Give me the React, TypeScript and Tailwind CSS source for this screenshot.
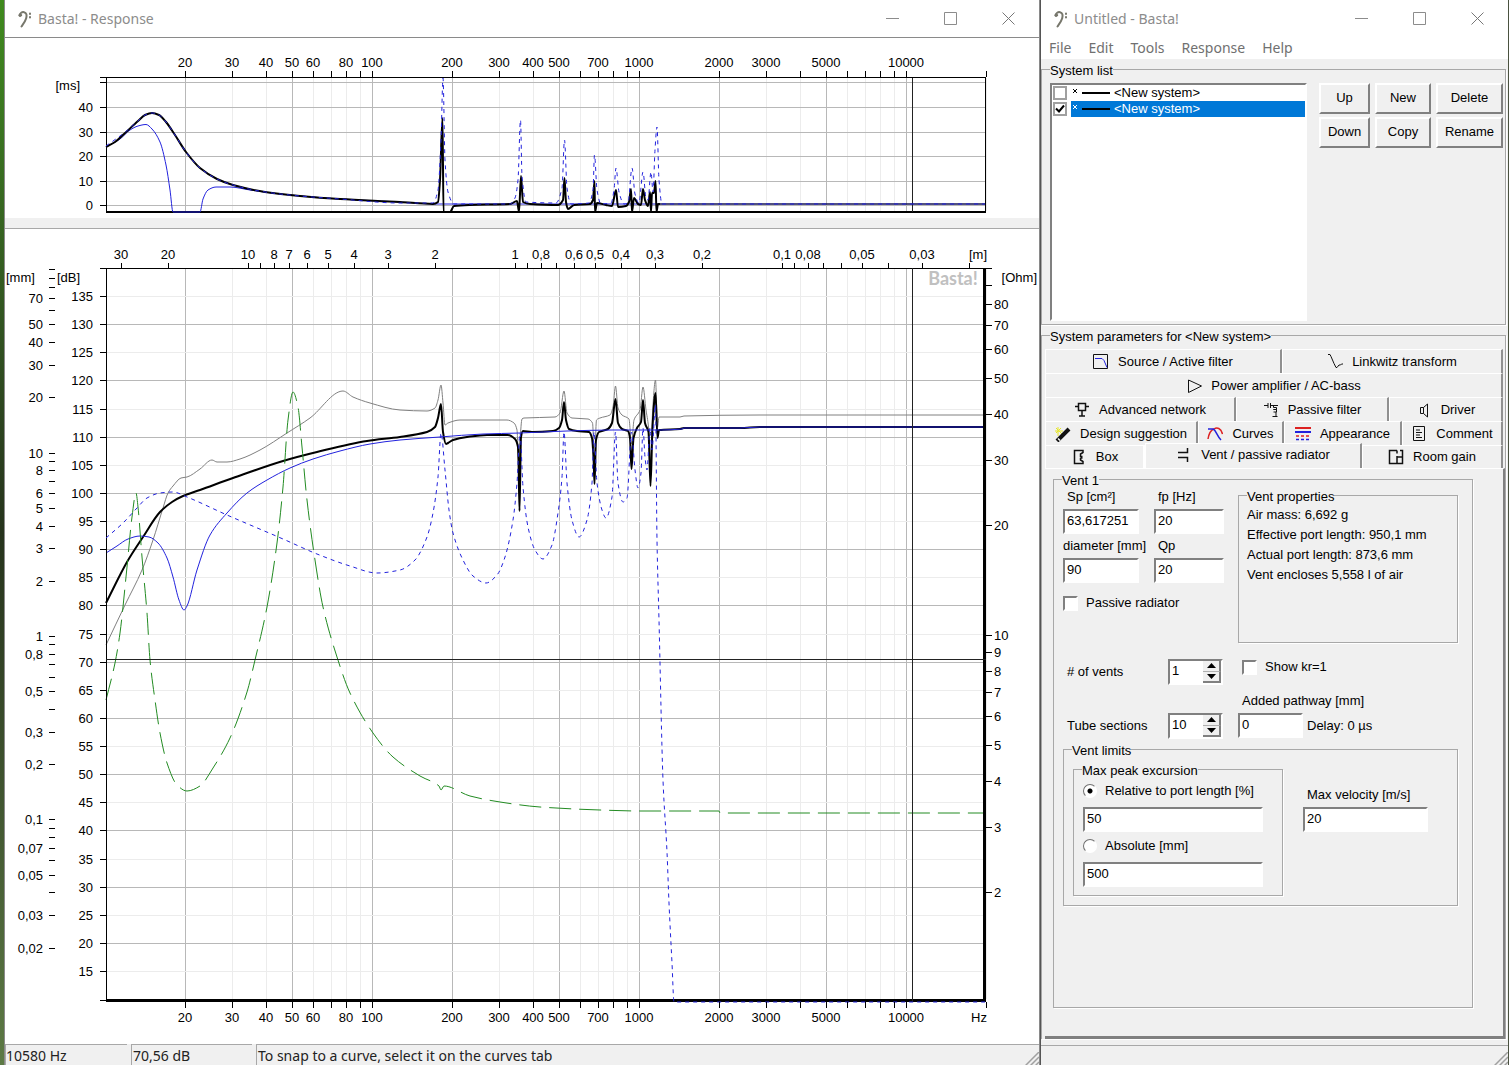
import { useState } from 'react';
import type { ReactNode } from 'react';
import clsx from 'clsx';

type Point = [number, number];

const LEFT = 106;
const RIGHT = 985;
const CURSOR_X = 912;

const freqX = (f: number) => Math.round(372 + 267 * (Math.log10(f) - 2));
const waveX = (m: number) => Math.round(515 - 267 * Math.log10(m));
const dbY = (db: number) => Math.round(296 + (135 - db) * 5.625);
const ohmY = (r: number) => Math.round(635 - 367 * (Math.log10(r) - 1));
const mmY = (mm: number) => Math.round(636 - 183.4 * Math.log10(mm));
const msY = (ms: number) => Math.round(205 - ms * 2.45);

const label = (n: number) => String(n).replace('.', ',');

// 1..9 steps of each decade, limited to a range
function decades(from: number, to: number): number[] {
  const out: number[] = [];
  for (let e = -2; e <= 4; e++) {
    for (let i = 1; i <= 9; i++) {
      const v = Number((i * 10 ** e).toPrecision(1));
      if (v >= from && v <= to) out.push(v);
    }
  }
  return out;
}

const FREQS = decades(20, 20000);
const FREQ_LABELS = [20, 30, 40, 50, 60, 80, 100, 200, 300, 400, 500, 700, 1000, 2000, 3000, 5000, 10000];
const FREQ_MAJOR = [20, 50, 100, 200, 500, 1000, 2000, 5000, 10000];
const WAVE_LABELS = [30, 20, 10, 8, 7, 6, 5, 4, 3, 2, 1, 0.8, 0.6, 0.5, 0.4, 0.3, 0.2, 0.1, 0.08, 0.05, 0.03];
const MM_LABELS = [70, 50, 40, 30, 20, 10, 8, 6, 5, 4, 3, 2, 1, 0.8, 0.5, 0.3, 0.2, 0.1, 0.07, 0.05, 0.03, 0.02];
const OHM_LABELS = [80, 70, 60, 50, 40, 30, 20, 10, 9, 8, 7, 6, 5, 4, 3, 2];
const DB_STEPS = Array.from({ length: 25 }, (_, i) => 135 - i * 5);

const SPL: Point[] = [
  [106, 603], [127, 562], [143, 537], [160, 512], [172, 502], [183, 496], [200, 490], [233, 478],
  [283, 461], [317, 452], [367, 441], [400, 437], [427, 432], [435, 427], [438, 418], [441, 404],
  [443, 432], [446, 444], [448, 443], [453, 440], [467, 437], [487, 435], [508, 435], [515, 439],
  [518, 447], [518.5, 460], [519.5, 511], [521, 437], [523, 431], [532, 432], [553, 431], [559, 428],
  [562, 420], [564, 402], [566, 420], [569, 429], [577, 431], [589, 432], [592, 438], [593.5, 457],
  [594.5, 484], [596, 440], [599, 432], [608, 429], [612, 423], [615.5, 399], [618, 423], [622, 429],
  [628, 431], [630, 438], [631.5, 469], [633.5, 438], [637, 428], [641, 422], [643, 400], [645, 423],
  [648.5, 432], [650.5, 486], [652.5, 427], [655.5, 393], [657.5, 438], [659, 430], [680, 429], [684, 428],
  [740, 428], [760, 427], [985, 427],
];

const MAX_SPL: Point[] = [
  [106, 645], [125, 605], [142, 570], [153, 540], [163, 508], [168, 493], [173, 486], [181, 478],
  [187, 477], [200, 469], [212, 460], [217, 462], [227, 462], [240, 459], [260, 450], [287, 433],
  [310, 418], [343, 391], [353, 397], [370, 403], [400, 410], [427, 411], [435, 408], [438, 400],
  [441, 385], [443, 403], [445, 425], [448, 423], [460, 420], [507, 420], [514, 423], [517, 430],
  [518.5, 460], [520, 440], [522, 419], [524, 418], [555, 417], [560, 413], [564, 391], [567, 413],
  [572, 418], [588, 419], [592.5, 423], [594.5, 460], [596.5, 420], [600, 418], [610, 415], [613, 407],
  [615.5, 386], [618, 408], [622, 415], [629, 419], [631.5, 444], [634, 420], [640, 410], [643, 387],
  [646, 410], [648.5, 427], [650.5, 470], [652.5, 413], [655.5, 380], [657.5, 427], [659, 417], [680, 417],
  [684, 416], [760, 415], [985, 415],
];

const DRIVER_SPL: Point[] = [
  [106, 553], [117, 546], [128, 539], [140, 536], [149, 537], [158, 543], [167, 558], [173, 577],
  [179, 600], [184, 610], [187, 606], [197, 570], [210, 535], [227, 513], [247, 493], [267, 480],
  [290, 468], [313, 459], [340, 451], [370, 444], [400, 440], [440, 437], [483, 434], [520, 433],
  [567, 431], [613, 430], [660, 430], [682, 429], [684, 428], [740, 428], [760, 427], [985, 427],
];

const VENT_SPL: Point[] = [
  [106, 538], [123, 523], [137, 508], [147, 498], [160, 493], [173, 492], [187, 497], [227, 515],
  [283, 539], [317, 554], [350, 566], [377, 573], [400, 570], [415, 560], [427, 537], [433, 513],
  [438, 477], [441, 433], [445, 470], [449, 510], [453, 533], [463, 560], [473, 576], [486, 583],
  [497, 575], [505, 557], [513, 520], [517, 483], [520, 433], [523, 487], [528, 527], [535, 550],
  [543, 559], [552, 545], [558, 513], [562, 477], [564, 432], [567, 483], [572, 520], [579, 537],
  [587, 520], [592, 483], [594, 432], [597, 483], [602, 510], [606, 518], [612, 497], [615.5, 432],
  [618, 483], [623, 502], [627, 498], [631.5, 432], [635, 470], [638, 488], [641, 473], [643, 428],
  [645, 457], [647, 470], [650, 428], [652, 450], [655.5, 405], [657, 540], [659, 620], [663, 780],
  [667, 852], [669, 903], [672, 963], [674, 1002], [985, 1002],
];

const IMPEDANCE: Point[] = [
  [106, 700], [115, 663], [120, 633], [127, 567], [132, 517], [136, 493], [138, 507], [142, 557],
  [147, 613], [150, 660], [155, 700], [160, 733], [167, 763], [177, 785], [187, 791], [200, 786],
  [213, 768], [230, 738], [247, 692], [255, 660], [267, 607], [277, 543], [283, 487], [288, 420],
  [293, 392], [298, 407], [302, 447], [307, 500], [315, 560], [323, 607], [337, 657], [350, 693],
  [373, 733], [393, 757], [420, 776], [439, 786], [441, 790], [444, 786], [470, 796], [500, 802],
  [540, 807], [600, 810], [640, 811], [719, 811], [720, 813], [985, 813],
];

const DELAY: Point[] = [
  [106, 147], [115, 142], [124, 134], [138, 121], [145, 115], [152, 113], [159, 115], [166, 122],
  [175, 135], [186, 152], [200, 168], [217, 179], [233, 185], [265, 192], [300, 196], [340, 199],
  [400, 202], [433, 204], [438, 202], [440, 180], [442.5, 118], [443.5, 212], [450, 212], [454, 206],
  [470, 205], [510, 204], [517, 201], [519, 212], [521, 176], [523, 202], [530, 204], [558, 205],
  [563, 200], [564.5, 178], [566, 202], [568, 209], [574, 205], [590, 204], [593, 200], [594.5, 181],
  [595, 212], [597, 203], [606, 205], [612, 206], [616, 190], [618, 207], [626, 206], [629, 202],
  [631, 189], [632, 212], [634, 198], [638, 204], [641, 205], [643, 189], [645, 200], [648, 206],
  [650, 192], [651, 212], [652, 193], [654, 193], [655.5, 181], [656.5, 212], [658, 204], [660, 204],
];

const VENT_DELAY: Point[] = [
  [106, 146], [124, 133], [138, 121], [145, 115], [152, 113], [159, 115], [166, 122], [175, 135],
  [186, 152], [200, 168], [217, 179], [233, 185], [265, 192], [300, 196], [340, 199], [400, 203],
  [433, 203], [438, 190], [441, 140], [443, 78], [445, 160], [448, 192], [454, 204], [510, 204],
  [515, 198], [518, 180], [520.5, 120], [522, 176], [526, 202], [556, 203], [562, 188], [564.5, 140],
  [567, 188], [571, 204], [589, 203], [593, 190], [594.5, 155], [597, 190], [601, 204], [611, 203],
  [614, 190], [616, 168], [619, 192], [624, 204], [628, 203], [632, 168], [635, 194], [639, 203],
  [643, 172], [646, 198], [648, 200], [651, 172], [653, 192], [655, 150], [657, 127], [659, 180],
  [662, 204], [985, 204],
];

const DRIVER_DELAY: Point[] = [
  [106, 147], [120, 139], [130, 130], [138, 126], [146, 124.5], [152, 129], [160, 142], [166, 165],
  [170, 190], [173, 212], [200, 212], [203, 199], [208, 190], [216, 187], [230, 187], [250, 190],
  [280, 194], [340, 199], [400, 202], [436, 204], [985, 204],
];

// Monotone cubic through the points, so peaks and notches never overshoot
function curvePath(points: Point[]): string {
  const slopes = points.slice(1).map((p, i) => (p[1] - points[i][1]) / (p[0] - points[i][0]));
  const tangents = points.map((_, i) => {
    if (i === 0) return slopes[0];
    if (i === points.length - 1) return slopes[i - 1];
    const a = slopes[i - 1];
    const b = slopes[i];
    return a * b <= 0 ? 0 : (2 * a * b) / (a + b);
  });
  let d = `M${points[0][0]} ${points[0][1]}`;
  for (let i = 1; i < points.length; i++) {
    const [x0, y0] = points[i - 1];
    const [x1, y1] = points[i];
    const h = (x1 - x0) / 3;
    d += `C${x0 + h} ${y0 + tangents[i - 1] * h} ${x1 - h} ${y1 - tangents[i] * h} ${x1} ${y1}`;
  }
  return d;
}

function Curve({ points, className, dash }: { points: Point[]; className: string; dash?: string }) {
  return (
    <path d={curvePath(points)} fill="none" strokeDasharray={dash} strokeLinejoin="round" className={className} />
  );
}

function VerticalGrid({ top, bottom }: { top: number; bottom: number }) {
  return (
    <g shapeRendering="crispEdges">
      {FREQS.map((f) => (
        <rect
          key={f}
          x={freqX(f)}
          y={top}
          width={1}
          height={bottom - top}
          className={FREQ_MAJOR.includes(f) ? 'fill-[#b8b8b8]' : 'fill-[#ececec]'}
        />
      ))}
    </g>
  );
}

function FreqTicks({ y, textY }: { y: number; textY: number }) {
  return (
    <g>
      {FREQS.map((f) => (
        <rect key={f} x={freqX(f)} y={y} width={1} height={6} shapeRendering="crispEdges" />
      ))}
      {FREQ_LABELS.map((f) => (
        <text key={f} x={freqX(f)} y={textY} textAnchor="middle">
          {f}
        </text>
      ))}
    </g>
  );
}

function DelayChart() {
  return (
    <svg
      viewBox="5 38 1034 180"
      role="img"
      aria-label="Group delay"
      className="block w-full fill-black font-['Liberation_Sans',sans-serif] text-[13px]"
    >
      <VerticalGrid top={78} bottom={211} />
      <g shapeRendering="crispEdges">
        {[0, 10, 20, 30, 40, 50].map((ms) => (
          <g key={ms}>
            <rect x={LEFT} y={msY(ms)} width={RIGHT - LEFT} height={1} className="fill-[#b8b8b8]" />
            <rect x={100} y={msY(ms)} width={6} height={1} />
          </g>
        ))}
        <rect x={100} y={77} width={886} height={1} />
        <rect x={LEFT} y={77} width={1} height={135} />
        <rect x={RIGHT} y={77} width={1} height={135} />
        <rect x={LEFT} y={211} width={880} height={2} />
        <rect x={CURSOR_X} y={78} width={1} height={134} className="fill-[#222]" />
      </g>
      <FreqTicks y={71} textY={67} />
      <text x={80} y={90} textAnchor="end">[ms]</text>
      {[0, 10, 20, 30, 40].map((ms) => (
        <text key={ms} x={93} y={msY(ms) + 5} textAnchor="end">
          {ms}
        </text>
      ))}
      <Curve points={DRIVER_DELAY} className="stroke-[#2222dd]" />
      <Curve points={DELAY} className="stroke-black stroke-2" />
      <Curve points={[[658, 204], [985, 204]]} className="stroke-[#111]" />
      <Curve points={VENT_DELAY} dash="4 4" className="stroke-[#2222dd]" />
    </svg>
  );
}

function ResponseChart() {
  return (
    <svg
      viewBox="5 229 1034 815"
      role="img"
      aria-label="Frequency response"
      className="block w-full fill-black font-['Liberation_Sans',sans-serif] text-[13px]"
    >
      <VerticalGrid top={269} bottom={999} />
      <g shapeRendering="crispEdges">
        {DB_STEPS.map((db) => (
          <g key={db}>
            <rect
              x={LEFT}
              y={dbY(db)}
              width={RIGHT - LEFT}
              height={1}
              className={db % 10 === 0 ? 'fill-[#b8b8b8]' : 'fill-[#ececec]'}
            />
            <rect x={100} y={dbY(db)} width={6} height={1} />
          </g>
        ))}
        <rect x={100} y={1000} width={6} height={1} />
        {decades(0.02, 100).map((mm) => (
          <rect key={mm} x={49} y={mmY(mm)} width={6} height={1} />
        ))}
        {decades(2, 100).map((r) => (
          <rect key={r} x={986} y={ohmY(r)} width={6} height={1} />
        ))}
        {decades(0.02, 30).map((m) => (
          <rect key={m} x={waveX(m)} y={263} width={1} height={6} />
        ))}
      </g>
      <text x={953} y={285} textAnchor="middle" className="fill-[#c0c0c0] font-['Lato',sans-serif] text-[18px] font-bold">
        Basta!
      </text>
      <Curve points={MAX_SPL} className="stroke-[#808080]" />
      <Curve points={SPL} className="stroke-black stroke-2" />
      <Curve points={DRIVER_SPL} className="stroke-[#2222dd]" />
      <Curve points={IMPEDANCE} dash="22 8" className="stroke-[#228b22]" />
      <g shapeRendering="crispEdges">
        <rect x={100} y={268} width={885} height={1} />
        <rect x={LEFT} y={268} width={1} height={733} />
        <rect x={983} y={268} width={3} height={734} />
        <rect x={LEFT} y={999} width={880} height={3} />
        <rect x={CURSOR_X} y={268} width={1} height={733} className="fill-[#222]" />
        <rect x={LEFT} y={659} width={880} height={1} className="fill-[#222]" />
      </g>
      <Curve points={VENT_SPL} dash="4 4" className="stroke-[#2222dd]" />

      {WAVE_LABELS.map((m) => (
        <text key={m} x={waveX(m)} y={259} textAnchor="middle">
          {label(m)}
        </text>
      ))}
      <text x={978} y={259} textAnchor="middle">[m]</text>
      <text x={6} y={282}>[mm]</text>
      <text x={80} y={282} textAnchor="end">[dB]</text>
      <text x={1037} y={282} textAnchor="end">[Ohm]</text>
      {MM_LABELS.map((mm) => (
        <text key={mm} x={43} y={mmY(mm) + 5} textAnchor="end">
          {label(mm)}
        </text>
      ))}
      {DB_STEPS.map((db) => (
        <text key={db} x={93} y={dbY(db) + 5} textAnchor="end">
          {db}
        </text>
      ))}
      {OHM_LABELS.map((r) => (
        <text key={r} x={994} y={ohmY(r) + 5}>
          {r}
        </text>
      ))}
      <FreqTicks y={1002} textY={1022} />
      <text x={979} y={1022} textAnchor="middle">Hz</text>
    </svg>
  );
}

function BassClef() {
  return (
    <svg viewBox="0 0 16 18" className="h-[18px] w-4" fill="none" stroke="#77776c" strokeLinecap="round">
      <path d="M2.500 5.500C3 3 5 1.800 7 2.200c2.600.5 3 3.200 2.200 6C8.300 11.500 6 14.500 4.500 16.500" strokeWidth="2" />
      <circle cx="3.300" cy="5.200" r="1.300" fill="#77776c" />
      <path d="M13 3.500v.6M13 7v.6" strokeWidth="2" />
    </svg>
  );
}

function TitleBar({ title }: { title: string }) {
  return (
    <header className="flex h-[37px] shrink-0 items-center bg-white pr-0.5 pl-3 font-['Noto_Sans','Open_Sans',sans-serif] text-sm text-[#8c8c8c]">
      <BassClef />
      <h1 className="flex-1 pl-[5px]">{title}</h1>
      <button type="button" aria-label="Minimize" className="flex h-full w-[58px] items-center justify-center">
        <svg viewBox="0 0 13 13" className="size-[13px]" stroke="#8c8c8c">
          <path d="M0 6.5h13" />
        </svg>
      </button>
      <button type="button" aria-label="Maximize" className="flex h-full w-[58px] items-center justify-center">
        <svg viewBox="0 0 13 13" className="size-[13px]" fill="none" stroke="#8c8c8c">
          <path d="M.5.5h12v12H.5z" />
        </svg>
      </button>
      <button type="button" aria-label="Close" className="flex h-full w-[58px] items-center justify-center">
        <svg viewBox="0 0 13 13" className="size-[13px]" stroke="#777">
          <path d="M.5.5l12 12M12.500.5l-12 12" />
        </svg>
      </button>
    </header>
  );
}

function Grip() {
  return (
    <svg viewBox="0 0 14 14" className="size-[14px] self-end" stroke="#a0a0a0">
      <path d="M0 14L14 0M5 14l9-9M10 14l4-4" strokeWidth="1.500" />
    </svg>
  );
}

function ResponseWindow() {
  return (
    <section className="flex min-w-0 flex-1 flex-col border-x border-[#8a8a8a] bg-white">
      <TitleBar title="Basta! - Response" />
      <div className="border-t border-[#8a8a8a]">
        <DelayChart />
      </div>
      <div className="h-[10px] shrink-0 bg-[#f0f0f0]" />
      <div className="flex-1 border-t border-[#a8a8a8]">
        <ResponseChart />
      </div>
      <footer className="flex h-[22px] shrink-0 gap-1 bg-[#f0f0f0] font-['Noto_Sans','Open_Sans',sans-serif] text-sm leading-[22px] text-[#222]">
        <span className="w-[122px] border-t border-l border-[#a8a8a8]">10580 Hz</span>
        <span className="w-[121px] border-t border-l border-[#a8a8a8] pl-px">70,56 dB</span>
        <span className="flex flex-1 justify-between border-t border-l border-[#a8a8a8] pl-px">
          To snap to a curve, select it on the curves tab
          <Grip />
        </span>
      </footer>
    </section>
  );
}

function Group({ title, className, children }: { title: string; className?: string; children: ReactNode }) {
  return (
    <fieldset className={clsx('min-w-0 border border-[#a8a8a8] shadow-[1px_1px_0_#fff]', className)}>
      <legend className="ml-2 pt-1 leading-4">{title}</legend>
      {children}
    </fieldset>
  );
}

const sunken = 'border-2 border-t-[#808080] border-l-[#808080] border-r-white border-b-white bg-white';

function TextBox({ id, value, name, className }: { id: string; value: string; name?: string; className?: string }) {
  return (
    <input
      id={id}
      type="text"
      aria-label={name}
      defaultValue={value}
      className={clsx('h-[25px] px-0.5 pb-0.5', sunken, className)}
    />
  );
}

function Field({ id, title, value, className }: { id: string; title: string; value: string; className?: string }) {
  return (
    <div className={clsx('flex flex-col gap-1', className)}>
      <label htmlFor={id} className={clsx('leading-4 whitespace-nowrap', id !== 'diameter' && 'pl-1')}>
        {title}
      </label>
      <TextBox id={id} value={value} className="w-full" />
    </div>
  );
}

function CheckBox({ title }: { title: string }) {
  return (
    <label className="flex items-center gap-2 leading-4">
      <input type="checkbox" className={clsx('size-[15px] appearance-none', sunken)} />
      {title}
    </label>
  );
}

function Spinner({ id, initial }: { id: string; initial: number }) {
  const [value, setValue] = useState(initial);
  return (
    <div className={clsx('flex h-[26px] w-[55px]', sunken)}>
      <input
        id={id}
        type="text"
        value={value}
        onChange={(e) => setValue(Number(e.target.value) || 0)}
        className="w-0 flex-1 px-0.5 pb-0.5"
      />
      <div className="flex w-[18px] flex-col">
        <button
          type="button"
          aria-label="Increase"
          onClick={() => setValue(value + 1)}
          className="flex flex-1 items-center justify-center border-r-2 border-b border-r-[#808080] border-b-[#b0b0b0] bg-[#f0f0f0]"
        >
          <svg viewBox="0 0 9 5" className="h-[5px] w-[9px]">
            <path d="M4.500 0L9 5H0z" />
          </svg>
        </button>
        <button
          type="button"
          aria-label="Decrease"
          onClick={() => setValue(value - 1)}
          className="flex flex-1 items-center justify-center border-r-2 border-b-2 border-[#808080] bg-[#f0f0f0]"
        >
          <svg viewBox="0 0 9 5" className="h-[5px] w-[9px]">
            <path d="M0 0h9L4.500 5z" />
          </svg>
        </button>
      </div>
    </div>
  );
}

function PushButton({ children }: { children: ReactNode }) {
  return (
    <button
      type="button"
      className="h-[31px] border-2 border-t-white border-r-[#808080] border-b-[#808080] border-l-white pb-0.5 text-center"
    >
      {children}
    </button>
  );
}

function SystemRow({ selected }: { selected?: boolean }) {
  return (
    <li>
      <label className="flex h-4 items-center gap-1 pl-px leading-4">
        <input type="checkbox" defaultChecked={selected} className="peer sr-only" />
        <span className="flex size-[14px] shrink-0 items-center justify-center border-2 border-[#a0a0a0] bg-white">
          {selected && (
            <svg viewBox="0 0 10 10" className="size-[10px] shrink-0" fill="none" stroke="#000" strokeWidth="2">
              <path d="M1 4.500l3 3L9 1.500" />
            </svg>
          )}
        </span>
        <span className={clsx('flex flex-1 items-center pl-0.5', selected && 'bg-[#0078d7] text-white')}>
          <svg viewBox="0 0 37 16" className="h-4 w-[37px]" stroke="currentColor" fill="none">
            <path d="M0 4l4 4M4 4l-4 4" />
            <path d="M9 8h28" stroke="#000" strokeWidth="2" />
          </svg>
          <span className="pl-1">&lt;New system&gt;</span>
        </span>
      </label>
    </li>
  );
}

const icons = {
  source: (
    <>
      <path d="M.5.5h14v14H.5z" />
      <path d="M2 4.500h7l2 2 3 7" stroke="#2222dd" />
    </>
  ),
  linkwitz: <path d="M1 .5h2l1 2 3 7 2 4h1l2-2.500h1.500l1-1H16" />,
  amp: <path d="M2.500 2v12.500L15.500 8z" />,
  network: <path d="M4.500 1.500h7v7h-7zM1 4.500h3.500M11.500 4.500H15M8 8.500v5M5 14h6" strokeWidth="1.500" />,
  passive: (
    <path d="M1 3.500h4M5 1v5M7.500 1v5M7.500 3.500H15M10.500 3.500v2h3v2h-3M10.500 7.500h3v2.500h-3M13 10v4M9.500 14.500h5" />
  ),
  driver: <path d="M4.500 5.500h3v6h-3zM7.500 5.500l4-3.500v13l-4-3.500" />,
  wand: (
    <>
      <path d="M3 1v9M0 5h8M1 2l6 6M6 2L1 7" stroke="#e6e62a" />
      <path d="M2 15L14 3" strokeWidth="4" />
      <path d="M3 12.500l2 2" stroke="#fff" strokeWidth="1.500" />
    </>
  ),
  curves: (
    <>
      <path d="M1 13c1-6 3-9 6-10 3-2 7-1 8.500 5" stroke="#dd2222" strokeWidth="1.500" />
      <path d="M1 3h5c3 1 4 7 8 11" stroke="#2222dd" strokeWidth="1.500" />
    </>
  ),
  appearance: (
    <>
      <path d="M0 2h16" stroke="#dd2222" strokeWidth="2" />
      <path d="M0 6h16" stroke="#2222dd" strokeWidth="2" />
      <path d="M1 10h15" stroke="#dd2222" strokeWidth="1.500" strokeDasharray="3 2" />
      <path d="M1 13.500h15" stroke="#2222dd" strokeWidth="1.500" strokeDasharray="3 2" />
    </>
  ),
  comment: <path d="M2.500.5h11v14h-11zM5 4h4M5 6.500h6M5 9h4M5 11.500h6" />,
  box: <path d="M12 4V1.500H3.500v13H12V12M12 3.500L9.500 5v2.500h2M9.500 9h2M12 12.500L9.500 11V9" strokeWidth="1.500" />,
  vent: <path d="M2 5.500h9.500V1M2 10.500h9.500V15" strokeWidth="1.500" />,
  room: <path d="M9 1.500H1.500v13h13v-13H12M9 1.500v3M9 7v7.500M9 8h5.500" strokeWidth="1.500" />,
};

type Tab = { icon: keyof typeof icons; title: string; className: string };

const TAB_ROWS: Tab[][] = [
  [
    { icon: 'source', title: 'Source / Active filter', className: 'w-[237px]' },
    { icon: 'linkwitz', title: 'Linkwitz transform', className: 'flex-1' },
  ],
  [{ icon: 'amp', title: 'Power amplifier / AC-bass', className: 'flex-1' }],
  [
    { icon: 'network', title: 'Advanced network', className: 'w-[191px]' },
    { icon: 'passive', title: 'Passive filter', className: 'w-[153px]' },
    { icon: 'driver', title: 'Driver', className: 'flex-1' },
  ],
  [
    { icon: 'wand', title: 'Design suggestion', className: 'w-[153px]' },
    { icon: 'curves', title: 'Curves', className: 'w-[86px]' },
    { icon: 'appearance', title: 'Appearance', className: 'w-[118px]' },
    { icon: 'comment', title: 'Comment', className: 'flex-1' },
  ],
  [
    { icon: 'box', title: 'Box', className: 'w-[100px]' },
    { icon: 'vent', title: 'Vent / passive radiator', className: 'w-[217px]' },
    { icon: 'room', title: 'Room gain', className: 'flex-1' },
  ],
];

function Tabs() {
  const [active, setActive] = useState('Vent / passive radiator');
  return (
    <div role="tablist" className="pr-0.5">
      {TAB_ROWS.map((row) => (
        <div key={row[0].title} className="flex h-6 last:h-[23px]">
          {row.map((tab) => (
            <button
              key={tab.title}
              type="button"
              role="tab"
              aria-selected={active === tab.title}
              onClick={() => setActive(tab.title)}
              className={clsx(
                'flex items-center justify-center gap-[9px] border-t border-l border-r-2 border-t-white border-r-[#909090] border-l-white whitespace-nowrap',
                active === tab.title && '-mt-0.5 bg-[#f0f0f0] pb-0.5',
                tab.icon === 'box' && 'border-r-white',
                tab.className,
              )}
            >
              <svg viewBox="0 0 16 16" className="size-4 shrink-0" fill="none" stroke="#111">
                {icons[tab.icon]}
              </svg>
              {tab.title}
            </button>
          ))}
        </div>
      ))}
    </div>
  );
}

const radio =
  'size-[14px] appearance-none rounded-full border border-t-[#707070] border-l-[#707070] border-r-white border-b-white bg-white checked:bg-[radial-gradient(#000_2px,transparent_3px)]';

function VentPage() {
  return (
    <div
      role="tabpanel"
      className="flex flex-1 flex-col border-t border-r-2 border-b-[3px] border-t-white border-r-[#808080] border-b-[#808080] pr-[30px] pb-7 pl-2"
    >
      <Group title="Vent 1" className="flex-1">
        <div className="pr-[14px] pl-[9px]">
          <div className="flex">
            <div className="w-[175px]">
              <div className="grid w-[161px] grid-cols-[76px_70px] justify-between gap-y-1">
                <Field id="sp" title="Sp [cm²]" value="63,617251" />
                <Field id="fp" title="fp [Hz]" value="20" />
                <Field id="diameter" title="diameter [mm]" value="90" />
                <Field id="qp" title="Qp" value="20" />
              </div>
              <div className="pt-3">
                <CheckBox title="Passive radiator" />
              </div>
            </div>
            <Group title="Vent properties" className="-mt-1 min-h-[158px] flex-1">
              <div className="pl-2 leading-5">
                <p>Air mass: 6,692 g</p>
                <p>Effective port length: 950,1 mm</p>
                <p>Actual port length: 873,6 mm</p>
                <p>Vent encloses 5,558 l of air</p>
              </div>
            </Group>
          </div>

          <div className="grid grid-cols-[105px_70px_1fr] pt-4">
            <label htmlFor="vents" className="self-center pl-1">
              # of vents
            </label>
            <Spinner id="vents" initial={1} />
            <div className="pl-1">
              <CheckBox title="Show kr=1" />
            </div>
          </div>

          <div className="grid grid-cols-[105px_70px_1fr] gap-y-1 pt-2">
            <label htmlFor="pathway" className="col-start-3 pl-1 leading-4">
              Added pathway [mm]
            </label>
            <label htmlFor="sections" className="self-center pl-1">
              Tube sections
            </label>
            <Spinner id="sections" initial={10} />
            <div className="flex items-start gap-1">
              <TextBox id="pathway" value="0" className="w-[65px]" />
              <span className="self-center">Delay: 0 µs</span>
            </div>
          </div>

          <Group title="Vent limits">
            <div className="flex pb-[9px] pl-[9px]">
              <Group title="Max peak excursion" className="w-[210px]">
                <div className="px-[9px] pb-2">
                  <label className="flex items-center gap-2 pt-1 pb-2 leading-4">
                    <input type="radio" name="excursion" defaultChecked className={radio} />
                    Relative to port length [%]
                  </label>
                  <TextBox id="relative" name="Relative to port length" value="50" className="block w-[180px]" />
                  <label className="flex items-center gap-2 pt-[6px] pb-2 leading-4">
                    <input type="radio" name="excursion" className={radio} />
                    Absolute [mm]
                  </label>
                  <TextBox id="absolute" name="Absolute" value="500" className="block w-[180px]" />
                </div>
              </Group>
              <Field id="velocity" title="Max velocity [m/s]" value="20" className="ml-5 w-[125px] pt-7" />
            </div>
          </Group>
        </div>
      </Group>
    </div>
  );
}

function MainWindow() {
  return (
    <section className="flex w-[468px] shrink-0 flex-col border-l border-[#555] bg-[#f0f0f0] font-['Liberation_Sans',sans-serif] text-[13px] text-black">
      <TitleBar title="Untitled - Basta!" />
      <nav className="flex h-[22px] shrink-0 items-center gap-[17px] bg-white pl-2 font-['Noto_Sans','Open_Sans',sans-serif] text-sm text-[#707070]">
        {['File', 'Edit', 'Tools', 'Response', 'Help'].map((item) => (
          <button key={item} type="button">
            {item}
          </button>
        ))}
      </nav>
      <Group title="System list" className="mr-0.5">
        <div className="flex gap-3 pt-1 pr-0.5 pb-[3px] pl-2">
          <ul className={clsx('h-[238px] flex-1', sunken)}>
            <SystemRow />
            <SystemRow selected />
          </ul>
          <div className="grid grid-cols-[51px_56px_67px] content-start gap-x-[5px] gap-y-[3px]">
            <PushButton>Up</PushButton>
            <PushButton>New</PushButton>
            <PushButton>Delete</PushButton>
            <PushButton>Down</PushButton>
            <PushButton>Copy</PushButton>
            <PushButton>Rename</PushButton>
          </div>
        </div>
      </Group>
      <Group title="System parameters for <New system>" className="mr-0.5 flex flex-1 flex-col border-b-0">
        <div className="flex h-full flex-col pt-1 pl-[3px]">
          <Tabs />
          <VentPage />
        </div>
      </Group>
      <footer className="mt-[6px] flex h-[21px] shrink-0 justify-end border-t border-[#a8a8a8]">
        <Grip />
      </footer>
    </section>
  );
}

export default function App() {
  return (
    <main className="flex min-h-screen bg-[#2c3424]">
      <div className="w-1 shrink-0 bg-linear-to-b from-[#3f8a1d] via-[#26331c] to-[#5d7a45]" />
      <ResponseWindow />
      <MainWindow />
      <div className="w-px shrink-0 bg-[#4a5240]" />
    </main>
  );
}
